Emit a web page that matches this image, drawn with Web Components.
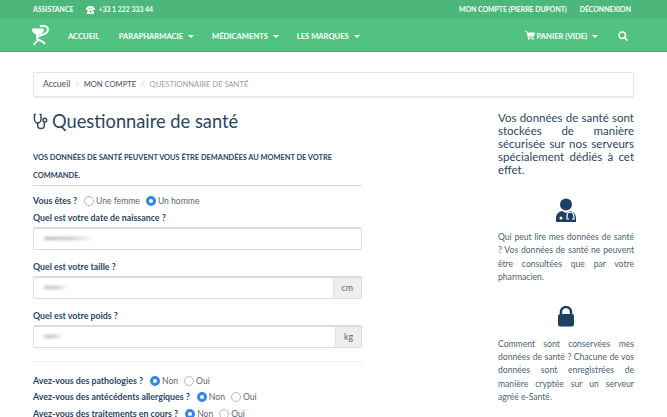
<!DOCTYPE html>
<html lang="fr">
<head>
<meta charset="utf-8">
<title>Questionnaire de santé</title>
<style>
html, body { margin: 0; padding: 0; height: 417px; overflow: hidden; background: #fff; }
body { font-family: Lato, "Open Sans", sans-serif; color: #2c4560; }
</style>
</head>
<body>
<app-topbar></app-topbar>
<app-navbar></app-navbar>
<page-body>
  <app-breadcrumb></app-breadcrumb>
  <page-columns>
    <health-form slot="main"></health-form>
    <side-info slot="side"></side-info>
  </page-columns>
</page-body>

<script>
const caret = `<i style="display:inline-block;width:0;height:0;margin-left:3px;vertical-align:1px;border-top:3px solid currentColor;border-left:3px solid transparent;border-right:3px solid transparent"></i>`;

class AppTopbar extends HTMLElement {
    constructor() {
        super();
        this.attachShadow({ mode: 'open' }).innerHTML = `
            <style>
                :host { display: flex; align-items: center; justify-content: space-between; height: 19px; padding: 0 36px 0 33px; background: #4db67b; color: #fff; font: 700 6.900px/19px Lato, sans-serif; }
                div { display: flex; align-items: center; }
                svg { margin: 0 3px 0 13px; }
                .right span + span { margin-left: 13px; }
            </style>
            <div>
                <span>ASSISTANCE</span>
                <svg width="9" height="8" viewBox="0 0 18 16" fill="#fff"><path d="M0 6C1 2 5 0 9 0s8 2 9 6v2h-5V5H5v3H0z"/><path d="M6 6h6l4 6v4H2v-4z"/><circle cx="9" cy="11" r="2.2" fill="#4db67b"/></svg>
                <span>+33 1 222 333 44</span>
            </div>
            <div class="right">
                <span>MON COMPTE (PIERRE DUPONT)</span>
                <span>DÉCONNEXION</span>
            </div>
        `;
    }
}
customElements.define('app-topbar', AppTopbar);

class AppNavbar extends HTMLElement {
    constructor() {
        super();
        this.attachShadow({ mode: 'open' }).innerHTML = `
            <style>
                :host { display: flex; align-items: center; box-sizing: border-box; height: 33px; padding: 1px 39px 0 32px; background: #51c27f; border-bottom: 1px solid #45b071; color: #fff; font: 700 7.600px/12px Lato, sans-serif; }
                .logo { flex: none; margin-right: 18px; }
                .links { display: flex; gap: 18px; flex: 1; }
                .links span:first-child { margin-right: 1.500px; }
                .cart { margin-right: 20px; display: flex; align-items: center; white-space: pre; }
                .cart svg { margin-right: 1px; }
            </style>
            <svg class="logo" width="18" height="21" viewBox="0 0 18 21" fill="none" stroke="#fff">
                <path d="M0 3.500h12c0 4-2.500 6-6 6s-6-2-6-6z" fill="#fff" stroke="none"/>
                <path d="M8 1.500c3-1.500 8-.5 8 3s-4 5-8 6c-3 1-3.500 3-2 4 2 1.200 5 1.500 7 4.500" stroke-width="2"/>
                <path d="M5 9v5" stroke-width="2"/>
                <path d="M2 20c1-3 3-4 5-5" stroke-width="1.800"/>
            </svg>
            <div class="links">
                <span>ACCUEIL</span>
                <span>PARAPHARMACIE ${caret}</span>
                <span>MÉDICAMENTS ${caret}</span>
                <span>LES MARQUES ${caret}</span>
            </div>
            <div class="cart">
                <svg width="10" height="9" viewBox="0 0 20 18" fill="#fff"><path d="M0 0h4l1 3h15l-2 8H7l.5 2H18v2H6L3 2H0z"/><circle cx="7.500" cy="16.500" r="1.500"/><circle cx="16" cy="16.500" r="1.500"/></svg>
                <span>PANIER (VIDE) ${caret}</span>
            </div>
            <svg width="10" height="10" viewBox="0 0 20 20" fill="none" stroke="#fff" stroke-width="3.200"><circle cx="8.500" cy="8.500" r="6.500"/><path d="M13 13l6 6"/></svg>
        `;
    }
}
customElements.define('app-navbar', AppNavbar);

class PageBody extends HTMLElement {
    constructor() {
        super();
        this.attachShadow({ mode: 'open' }).innerHTML = `
            <style>:host { display: block; padding: 20px 33px 0; }</style>
            <slot></slot>
        `;
    }
}
customElements.define('page-body', PageBody);

class AppBreadcrumb extends HTMLElement {
    constructor() {
        super();
        this.attachShadow({ mode: 'open' }).innerHTML = `
            <style>
                :host { display: flex; align-items: center; box-sizing: border-box; height: 25px; padding: 0 9px; border: 1px solid #e6e6e6; border-radius: 2px; box-shadow: 0 1px 1px #eee; font: 400 7.600px/23px Lato, sans-serif; color: #394f66; }
                i { font-style: normal; color: #c8ccd2; margin: 0 5px; }
                .home { font-size: 8.600px; }
                .on { color: #98a0a9; }
            </style>
            <span class="home">Accueil</span><i>/</i><span>MON COMPTE</span><i>/</i><span class="on">QUESTIONNAIRE DE SANTÉ</span>
        `;
    }
}
customElements.define('app-breadcrumb', AppBreadcrumb);

class PageColumns extends HTMLElement {
    constructor() {
        super();
        this.attachShadow({ mode: 'open' }).innerHTML = `
            <style>
                :host { display: grid; grid-template-columns: 329px 136px; justify-content: space-between; }
            </style>
            <slot name="main"></slot>
            <slot name="side"></slot>
        `;
    }
}
customElements.define('page-columns', PageColumns);

class RadioGroup extends HTMLElement {
    constructor() {
        super();
        this.attachShadow({ mode: 'open' });
    }

    connectedCallback() {
        const checked = this.getAttribute('checked');
        const opt = (name) => `<span class="dot ${name === checked ? 'on' : ''}"></span><span class="txt">${name}</span>`;
        this.shadowRoot.innerHTML = `
            <style>
                :host { display: flex; align-items: center; height: 16.600px; font: 400 8.600px/16px Lato, sans-serif; color: #56687b; }
                b { color: #2c4560; font-weight: 700; font-size: 8.800px; margin-right: 7px; }
                .dot { box-sizing: border-box; width: 10px; height: 10px; border: 1px solid #b4b9bf; border-radius: 50%; background: #fff; margin-right: 2px; }
                .dot.on { border: 3px solid #2f87ee; }
                .txt { margin-right: 6px; }
            </style>
            <b>${this.getAttribute('label')}</b>
            ${opt(this.getAttribute('first'))}
            ${opt(this.getAttribute('second'))}
        `;
    }
}
customElements.define('radio-group', RadioGroup);

class FormField extends HTMLElement {
    connectedCallback() {
        const unit = this.getAttribute('unit');
        const blur = this.getAttribute('blur') || '45';
        this.attachShadow({ mode: 'open' }).innerHTML = `
            <style>
                :host { display: block; }
                label { display: block; font: 700 8.800px/16px Lato, sans-serif; color: #2c4560; }
                .box { display: flex; box-sizing: border-box; height: 23px; margin-top: 1px; border: 1px solid #dcdcdc; border-top-width: 2px; border-radius: 2px; background: #fff; }
                .val { flex: 1; display: flex; align-items: center; padding-left: 10px; }
                .val span { display: block; width: ${blur}px; height: 3px; border-radius: 2px; background: linear-gradient(90deg, #b0b4b8, #c4c6c9 60%, #f2f2f2); filter: blur(1.500px); }
                .unit { padding: 0 8px; background: #eeeeee; border-left: 1px solid #e4e4e4; font: 400 8.800px/20px Lato, sans-serif; color: #56687b; }
            </style>
            <label>${this.getAttribute('label')}</label>
            <div class="box">
                <div class="val"><span></span></div>
                ${unit ? `<div class="unit">${unit}</div>` : ''}
            </div>
        `;
    }
}
customElements.define('form-field', FormField);

class HealthForm extends HTMLElement {
    constructor() {
        super();
        this.attachShadow({ mode: 'open' }).innerHTML = `
            <style>
                :host { display: block; }
                h1 { display: flex; align-items: center; margin: 13px 0 0; font: 400 18.300px/23px Lato, sans-serif; color: #2c4560; }
                h1 svg { margin-right: 3px; }
                h2 { margin: 16px 0 0; border-bottom: 1px solid #d5d8db; font: 700 7.400px/18px Lato, sans-serif; color: #2c4560; }
                radio-group.sex { margin-top: 7px; }
                form-field + form-field { margin-top: 9px; }
                hr { border: 0; border-top: 1px solid #eeeeee; margin: 13px 0 11px; }
            </style>
            <h1>
                <svg width="16" height="17" viewBox="0 0 17 17" fill="none" stroke="#2c4560" stroke-width="1.500">
                    <path d="M3 1H1.500v5c0 2.500 2 4 3.500 4s3.500-1.500 3.500-4V1H7"/>
                    <path d="M5 10v2.500c0 2 1.500 3.500 3.500 3.500s3.500-1.500 3.500-3.500V9"/>
                    <circle cx="12.500" cy="7" r="2"/>
                </svg>
                Questionnaire de santé
            </h1>
            <h2>VOS DONNÉES DE SANTÉ PEUVENT VOUS ÊTRE DEMANDÉES AU MOMENT DE VOTRE COMMANDE.</h2>
            <radio-group class="sex" label="Vous êtes ?" first="Une femme" second="Un homme" checked="Un homme"></radio-group>
            <form-field label="Quel est votre date de naissance ?" blur="48"></form-field>
            <form-field label="Quel est votre taille ?" unit="cm" blur="22"></form-field>
            <form-field label="Quel est votre poids ?" unit="kg" blur="18"></form-field>
            <hr>
            <radio-group label="Avez-vous des pathologies ?" first="Non" second="Oui" checked="Non"></radio-group>
            <radio-group label="Avez-vous des antécédents allergiques ?" first="Non" second="Oui" checked="Non"></radio-group>
            <radio-group label="Avez-vous des traitements en cours ?" first="Non" second="Oui" checked="Non"></radio-group>
        `;
    }
}
customElements.define('health-form', HealthForm);

class SideInfo extends HTMLElement {
    constructor() {
        super();
        this.attachShadow({ mode: 'open' }).innerHTML = `
            <style>
                :host { display: block; text-align: justify; color: #4b5f74; padding-top: 14px; }
                .lead { margin: 0; font: 400 11.500px/13px Lato, sans-serif; color: #2c4560; }
                .ico { display: flex; justify-content: center; }
                p.small { margin: 0; font: 400 8.600px/13.400px Lato, sans-serif; }
            </style>
            <p class="lead">Vos données de santé sont stockées de manière sécurisée sur nos serveurs spécialement dédiés à cet effet.</p>
            <div class="ico" style="margin-top:22px">
                <svg width="22" height="24" viewBox="0 0 22 24">
                    <circle cx="11" cy="6.500" r="6" fill="#1f3f63"/>
                    <path d="M1 24v-4c0-4 3-6.500 6-7l4 2 4-2c3 .5 6 3 6 7v4z" fill="#1f3f63"/>
                    <circle cx="6" cy="20" r="1.500" fill="#fff"/>
                    <path d="M14 14c3 0 5 2 5 5v2h-2M14 14c-2 1-2 3-2 5v2h2" fill="none" stroke="#fff" stroke-width="1.200"/>
                </svg>
            </div>
            <p class="small" style="margin-top:9px">Qui peut lire mes données de santé ? Vos données de santé ne peuvent être consultées que par votre pharmacien.</p>
            <div class="ico" style="margin-top:20px">
                <svg width="18" height="22" viewBox="0 0 18 22">
                    <path d="M4 10V7a5 5 0 0 1 10 0v3" fill="none" stroke="#1f3f63" stroke-width="2.400"/>
                    <rect x="1" y="9" width="16" height="12.500" rx="2" fill="#1f3f63"/>
                </svg>
            </div>
            <p class="small" style="margin-top:11px">Comment sont conservées mes données de santé ? Chacune de vos données sont enregistrées de manière cryptée sur un serveur agréé e-Santé.</p>
        `;
    }
}
customElements.define('side-info', SideInfo);
</script>
</body>
</html>
